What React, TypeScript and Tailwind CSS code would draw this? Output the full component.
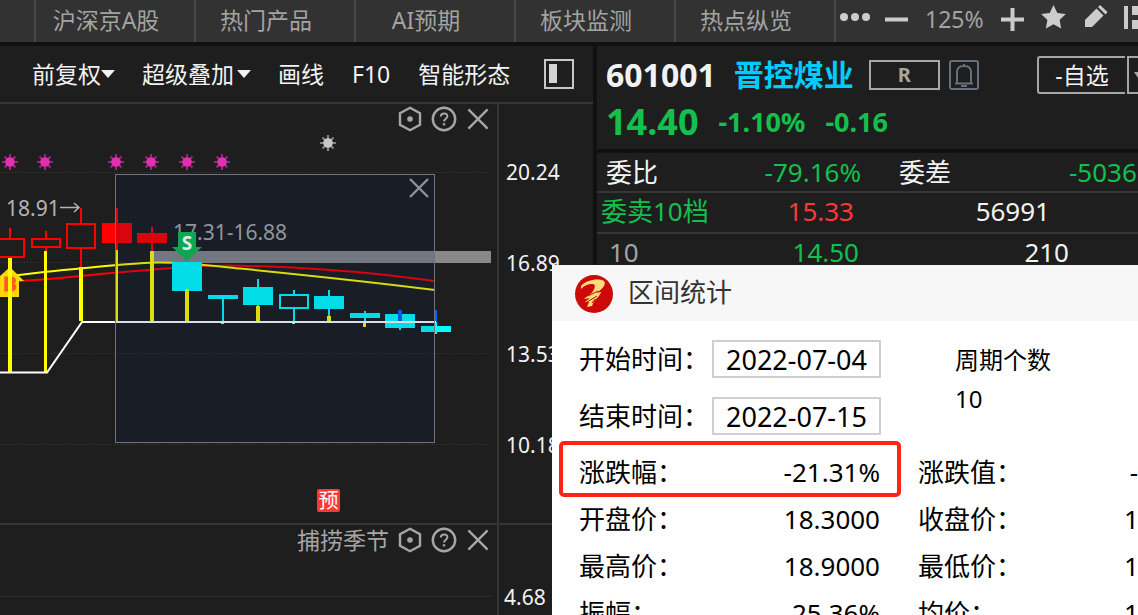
import type { ReactNode } from "react";

const TABS = ["沪深京A股", "热门产品", "AI预期", "板块监测", "热点纵览"];

const UP = "#ff0000";
const DOWN = "#00ffff";

interface Candle {
  x: number;
  high: number;
  low: number;
  top: number;
  bottom: number;
  color: string;
  hollow?: boolean;
}

const CANDLES: Candle[] = [
  { x: 10, high: 228, low: 258, top: 238, bottom: 258, color: UP, hollow: true },
  { x: 46, high: 231, low: 251, top: 238, bottom: 248, color: UP, hollow: true },
  { x: 81, high: 208, low: 267, top: 223, bottom: 249, color: UP, hollow: true },
  { x: 117, high: 208, low: 251, top: 223, bottom: 243, color: UP },
  { x: 152, high: 227, low: 251, top: 233, bottom: 243, color: UP },
  { x: 187, high: 262, low: 290, top: 262, bottom: 291, color: DOWN },
  { x: 223, high: 295, low: 322, top: 295, bottom: 299, color: DOWN },
  { x: 258, high: 279, low: 306, top: 287, bottom: 305, color: DOWN },
  { x: 294, high: 290, low: 322, top: 294, bottom: 309, color: DOWN, hollow: true },
  { x: 329, high: 290, low: 316, top: 296, bottom: 309, color: DOWN },
  { x: 365, high: 311, low: 323, top: 313, bottom: 318, color: DOWN },
  { x: 400, high: 314, low: 330, top: 314, bottom: 328, color: DOWN },
  { x: 436, high: 324, low: 334, top: 326, bottom: 332, color: DOWN },
];

// [x, y, width, height, color]
const BARS: [number, number, number, number, string][] = [
  [8, 258, 4, 114, "#ffff00"],
  [44, 251, 3, 121, "#ffff00"],
  [79, 267, 4, 54, "#ffff00"],
  [116, 250, 2, 71, "#ffff00"],
  [150, 251, 4, 70, "#ffff00"],
  [185, 289, 4, 32, "#ffff00"],
  [221, 322, 3, 2, "#ffff00"],
  [256, 306, 4, 15, "#ffff00"],
  [292, 321, 3, 3, "#ffff00"],
  [327, 316, 4, 5, "#ffff00"],
  [363, 323, 3, 4, "#ffff00"],
  [398, 310, 4, 11, "#0066ff"],
  [435, 310, 2, 11, "#0066ff"],
];

const STATS = [
  { label: "涨跌幅：", value: "-21.31%", label2: "涨跌值：", value2: "-" },
  { label: "开盘价：", value: "18.3000", label2: "收盘价：", value2: "1" },
  { label: "最高价：", value: "18.9000", label2: "最低价：", value2: "1" },
  { label: "振幅：", value: "25.36%", label2: "均价：", value2: "1" },
];

function Spark({ x, y, color }: { x: number; y: number; color: string }) {
  return (
    <g transform={`translate(${x} ${y})`}>
      <path d="M0-8V8M-8 0H8M-5.5-5.5 5.5 5.5M5.5-5.5-5.5 5.5" stroke={color} strokeWidth="2.2" opacity="0.6" />
      <circle r="4.8" fill={color} />
    </g>
  );
}

function PaneTools({ children }: { children?: ReactNode }) {
  return (
    <div className="absolute right-[6px] top-0 flex h-[30px] items-center gap-[8px] text-[#a6a6a6]">
      {children}
      <button type="button" aria-label="设置">
        <svg className="block" width="26" height="26" viewBox="0 0 26 26" fill="none" stroke="currentColor" strokeWidth="2.4">
          <path d="M13 1.8 23 7.2V18.8L13 24.2 3 18.8V7.2Z" />
          <circle cx="13" cy="13" r="2.8" fill="currentColor" stroke="none" />
        </svg>
      </button>
      <button type="button" aria-label="帮助">
        <svg className="block" width="26" height="26" viewBox="0 0 26 26" fill="none" stroke="currentColor" strokeWidth="2.4">
          <circle cx="13" cy="13" r="11.2" />
          <path d="M9.8 10.6C9.8 6.4 16.4 6.4 16.4 10.2 16.4 12.6 13 12.8 13 15.6" strokeWidth="2" />
          <path d="M13 17.2V19.4" />
        </svg>
      </button>
      <button type="button" aria-label="关闭">
        <svg className="block" width="26" height="26" viewBox="0 0 26 26" fill="none" stroke="currentColor" strokeWidth="2.4">
          <path d="M3.4 3.4 22.6 22.6M22.6 3.4 3.4 22.6" />
        </svg>
      </button>
    </div>
  );
}

function KLine() {
  return (
    <svg className="block" width="497" height="419" viewBox="0 104 497 419" fontFamily="'Noto Sans', 'Noto Sans CJK SC', sans-serif">
      {[172, 262, 353, 444].map((y) => (
        <path key={y} d={`M0 ${y + 0.5}H491`} stroke="#3c3c3c" strokeDasharray="1 2" />
      ))}
      {[10, 45, 116, 151, 187, 222].map((x) => (
        <Spark key={x} x={x} y={162} color="#e22fb4" />
      ))}
      <Spark x={328} y={143} color="#c8c8c8" />

      <rect x="154" y="251" width="337" height="12" fill="#888888" />
      <path d="M0 282C20 281 40 280 60 278S120 272 165 268.5 230 264.5 300 268 400 277 435 281" fill="none" stroke="#ff0000" strokeWidth="2" />
      <path d="M0 277C20 275 50 271 80 268.5S135 262.5 160 262.5 215 266 240 268.5 380 283 435 290" fill="none" stroke="#ffff00" strokeWidth="2" />

      {/* B marker */}
      <path d="M10 267 24 281H19V297H0V276Z" fill="#ffd60a" />
      <text x="10" y="291" fontSize="20" fontWeight="800" textAnchor="middle" fill="#ff5a1f" stroke="#ff5a1f">B</text>

      {CANDLES.map((c) => (
        <g key={c.x} stroke={c.color} strokeWidth="2">
          <path d={`M${c.x} ${c.high}V${c.top}M${c.x} ${c.bottom}V${Math.max(c.low, c.bottom)}`} />
          <rect x={c.x - 14} y={c.top + 1} width="28" height={c.bottom - c.top - 2} fill={c.hollow ? "none" : c.color} />
        </g>
      ))}
      {BARS.map(([x, y, w, h, color]) => (
        <rect key={x} x={x} y={y} width={w} height={h} fill={color} />
      ))}
      <path d="M436 322V334" stroke={DOWN} strokeWidth="2" />
      <path d="M0 372.5H47L82 322H436" fill="none" stroke="#ffffff" strokeWidth="2" />

      <text x="6" y="216" fontSize="21" fill="#b4b4b4">18.91</text>
      <path d="M60 207.5H79M74 203 79 207.5 74 212" fill="none" stroke="#b4b4b4" strokeWidth="1.5" />
      <text x="173" y="240" fontSize="21" fill="#aaaaaa">17.31-16.88</text>

      {/* selected range */}
      <rect x="115.5" y="174.5" width="319" height="268" fill="rgba(0,27,87,0.15)" stroke="#6d7480" />
      <path d="M410 179 428 197M428 179 410 197" stroke="#8f939b" strokeWidth="2.4" />

      {/* S marker */}
      <path d="M178 232H196V247H202L187 261 172 247H178Z" fill="#0da651" />
      <text x="187" y="250" fontSize="19" fontWeight="700" textAnchor="middle" fill="#dfe9e2">S</text>

      <rect x="317" y="489" width="23" height="23" rx="2" fill="#ff3636" />
      <text x="328.5" y="508" fontSize="20" textAnchor="middle" fill="#ffffff">预</text>
    </svg>
  );
}

function TopBar() {
  return (
    <header className="flex h-[42px] shrink-0 bg-[#323232] pl-[34px] text-[23px] leading-[38px] text-[#a3a3a3]">
      {TABS.map((tab) => (
        <button key={tab} type="button" className="w-[160px] shrink-0 border-l-2 border-[#474747] pb-[2px] pr-[18px]">
          {tab}
        </button>
      ))}
      <div className="flex grow items-start border-l-2 border-[#474747] text-[#cccccc]">
        <button type="button" aria-label="更多" className="ml-[3px]">
          <svg className="block" width="32" height="38" viewBox="0 0 32 38" fill="currentColor">
            <circle cx="5" cy="17" r="4" />
            <circle cx="16" cy="17" r="4" />
            <circle cx="27" cy="17" r="4" />
          </svg>
        </button>
        <button type="button" aria-label="缩小" className="ml-[14px]">
          <svg className="block" width="24" height="38" viewBox="0 0 24 38" fill="currentColor">
            <path d="M0 17.5H23V21.5H0Z" />
          </svg>
        </button>
        <span className="ml-[16px] w-[60px] text-[#a3a3a3]">125%</span>
        <button type="button" aria-label="放大" className="ml-[16px]">
          <svg className="block" width="24" height="38" viewBox="0 0 24 38" fill="currentColor">
            <path d="M0 17.5H9.5V8H13.5V17.5H23V21.5H13.5V31H9.5V21.5H0Z" />
          </svg>
        </button>
        <button type="button" aria-label="收藏" className="ml-[16px]">
          <svg className="block" width="26" height="38" viewBox="0 0 26 38" fill="currentColor">
            <path d="M12.5 5 16.3 12.9 24.8 14 18.6 20 20.2 28.5 12.5 24.3 4.8 28.5 6.4 20 .2 14 8.7 12.9Z" />
          </svg>
        </button>
        <button type="button" aria-label="编辑" className="ml-[18px]">
          <svg className="block" width="24" height="38" viewBox="0 0 24 38" fill="currentColor">
            <path d="M0 20 11.5 8.5 18.5 15.5 7 27H0Z" />
            <path d="M13 7 15 5 22.5 12 20.5 14.5Z" />
          </svg>
        </button>
        <button type="button" aria-label="布局" className="ml-[15px]">
          <svg className="block" width="14" height="38" viewBox="0 0 14 38" fill="currentColor">
            <path d="M0 6H4V29H0ZM8 6H14V15H8ZM8 20H14V29H8Z" />
          </svg>
        </button>
      </div>
    </header>
  );
}

function Caret() {
  return (
    <svg width="14" height="8" viewBox="0 0 14 8" fill="currentColor">
      <path d="M0 0H14L7 8Z" />
    </svg>
  );
}

function ChartPanel() {
  return (
    <section className="flex w-[593px] shrink-0 flex-col bg-[#1e1e1e]">
      <nav className="flex h-[58px] shrink-0 items-center border-b-2 border-[#353535] pl-8 text-[23px] leading-[34px] text-[#f2f2f2]">
        <button type="button" className="flex items-center">前复权<Caret /></button>
        <button type="button" className="ml-[27px] flex items-center gap-[3px]">超级叠加<Caret /></button>
        <button type="button" className="ml-[27px]">画线</button>
        <button type="button" className="ml-[28px]">F10</button>
        <button type="button" className="ml-[28px]">智能形态</button>
        <button type="button" aria-label="侧栏" className="ml-[34px]">
          <svg className="block" width="30" height="30" viewBox="0 0 30 30">
            <rect x="1" y="1" width="28" height="28" fill="none" stroke="#c8c8c8" strokeWidth="2" />
            <rect x="5" y="5" width="8" height="19" fill="#d4d4d4" />
          </svg>
        </button>
      </nav>
      <div className="flex h-[421px] shrink-0 border-b-2 border-[#353535]">
        <div className="relative w-[499px] border-r-2 border-[#353535]">
          <KLine />
          <PaneTools />
        </div>
        <div className="pl-[7px] pt-[23px] text-[21px] leading-[91px] text-[#f2f2f2]">
          <div>20.24</div>
          <div>16.89</div>
          <div>13.53</div>
          <div>10.18</div>
        </div>
      </div>
      <div className="flex min-h-[90px] grow">
        <div className="relative w-[499px] border-r-2 border-[#353535] pt-[71px]">
          <div className="mr-[6px] border-t border-dotted border-[#3c3c3c]" />
          <PaneTools>
            <span className="text-[23px] leading-[30px]">捕捞季节</span>
          </PaneTools>
        </div>
        <div className="pl-[5px] pt-[56px] text-[21px] leading-[32px] text-[#f2f2f2]">4.68</div>
      </div>
    </section>
  );
}

function QuotePanel() {
  return (
    <section className="flex min-w-0 grow flex-col overflow-hidden">
      <div className="h-[103px] shrink-0 bg-[#1e1e1e]">
        <div className="flex h-[58px] items-center pl-[9px]">
          <span className="text-[32px] font-bold leading-[40px] text-[#f2f2f2]">601001</span>
          <h1 className="ml-[18px] shrink-0 text-[30px] font-bold leading-[40px] text-[#00ccff]">晋控煤业</h1>
          <button type="button" className="ml-[15px] h-[30px] w-[71px] shrink-0 border-2 border-[#a6a6a6] text-[20px] font-bold leading-[26px] text-[#a6a6a6]">R</button>
          <button type="button" aria-label="预警" className="ml-[9px] shrink-0">
            <svg className="block" width="30" height="30" viewBox="0 0 30 30" fill="none" stroke="#686e7a" strokeWidth="2">
              <rect x="1" y="1" width="28" height="28" rx="2" />
              <path d="M6 23.5H24M8 23V12C8 8 11 6 15 6S22 8 22 12V23M15 4V6M12 26H18" />
            </svg>
          </button>
          <div className="ml-auto flex shrink-0 gap-[2px] text-[23px] leading-[34px] text-[#f2f2f2]">
            <button type="button" className="h-[38px] w-[88px] rounded-l-[3px] border-2 border-r-0 border-[#a6a6a6]">-自选</button>
            <button type="button" aria-label="更多自选" className="h-[38px] w-[11px] overflow-hidden border-2 border-r-0 border-[#a6a6a6] pl-[5px]">
              <svg className="block" width="4" height="6" viewBox="0 0 4 6" fill="#a6a6a6">
                <path d="M0 0H4V6Z" />
              </svg>
            </button>
          </div>
        </div>
        <div className="flex h-[36px] items-center pl-[9px] font-bold text-[#13c04d]">
          <span className="text-[36px] leading-[36px]">14.40</span>
          <span className="ml-[20px] text-[27px] leading-[34px]">-1.10%</span>
          <span className="ml-[20px] text-[27px] leading-[34px]">-0.16</span>
        </div>
      </div>
      <div className="mt-[4px] flex h-[40px] shrink-0 border-b-2 border-[#353535] bg-[#1e1e1e] pl-[9px] text-[26px] leading-[38px] text-[#13c04d]">
        <span className="w-[90px] shrink-0 text-[#f2f2f2]">委比</span>
        <span className="w-[165px] shrink-0 text-right">-79.16%</span>
        <span className="ml-[38px] w-[170px] shrink-0 text-[#f2f2f2]">委差</span>
        <span>-5036</span>
      </div>
      <table className="w-full table-fixed border-collapse bg-[#1e1e1e] text-[26px] leading-[36px] text-[#f2f2f2]">
        <tbody>
          <tr className="h-[40px] border-b-2 border-[#353535] align-top">
            <th className="w-[128px] whitespace-nowrap p-0 pl-[4px] text-left font-normal text-[#13c04d]">委卖10档</th>
            <td className="w-[134px] p-0 pr-[5px] text-right text-[#ff3838]">15.33</td>
            <td className="p-0 pr-[88px] text-right">56991</td>
          </tr>
          <tr className="h-[40px] align-top">
            <th className="p-0 pl-[12px] text-left font-normal text-[#a3a3a3]">10</th>
            <td className="p-0 text-right text-[#13c04d]">14.50</td>
            <td className="p-0 pr-[69px] text-right">210</td>
          </tr>
        </tbody>
      </table>
      <div className="grow bg-[#1e1e1e]" />
    </section>
  );
}

function RangeDialog() {
  return (
    <div role="dialog" aria-labelledby="range-title" className="absolute bottom-0 left-[552px] right-0 top-[265px] overflow-hidden bg-white text-[26px] text-black">
      <div className="flex h-[56px] items-center bg-[#f7f7f7] pl-[22px]">
        <svg width="40" height="40" viewBox="0 0 40 40">
          <circle cx="20" cy="21" r="19" fill="#cc0a0a" />
          <path d="M7 13C12 7 24 5 30 8 33 12 27 17 22 20L27 19C26 23 22 26 20 28L18 33 13 34 15 29 11 29 16 25 10 26C13 23 18 21 19 18 21 15 22 12 19 11 14 11 11 12 7 16Z" fill="#fbdc7d" />
          <path d="M14 23 24 18M13 29 23 23M18 30 21 26" stroke="#cc0a0a" strokeWidth="1" />
        </svg>
        <h2 id="range-title" className="ml-[14px] pb-[2px] leading-[36px] text-[#333333]">区间统计</h2>
      </div>
      <div className="flex pl-[27px] pt-[19px]">
        <div className="flex w-[376px] shrink-0 flex-col gap-[19px]">
          <div className="flex h-[38px] items-center">
            <label htmlFor="start" className="w-[133px] whitespace-nowrap leading-[38px]">开始时间：</label>
            <input id="start" defaultValue="2022-07-04" className="h-[38px] w-[169px] border-2 border-[#cfcfcf] bg-white text-center text-[27px] leading-[34px]" />
          </div>
          <div className="flex h-[38px] items-center">
            <label htmlFor="end" className="w-[133px] whitespace-nowrap leading-[38px]">结束时间：</label>
            <input id="end" defaultValue="2022-07-15" className="h-[38px] w-[169px] border-2 border-[#cfcfcf] bg-white text-center text-[27px] leading-[34px]" />
          </div>
        </div>
        <div className="text-[24px] leading-[39px]">
          <div>周期个数</div>
          <div>10</div>
        </div>
      </div>
      <div className="relative pl-[27px] pt-[13px]">
        {STATS.map((row) => (
          <div key={row.label} className="flex h-[47px] items-center whitespace-nowrap leading-[40px]">
            <span className="w-[120px] shrink-0">{row.label}</span>
            <span className="w-[181px] shrink-0 text-right">{row.value}</span>
            <span className="ml-[38px] w-[206px] shrink-0">{row.label2}</span>
            <span className="grow text-right">{row.value2}</span>
          </div>
        ))}
        <div className="absolute left-[7px] top-[6px] h-[56px] w-[342px] rounded-[5px] border-4 border-[#ff2413]" />
      </div>
    </div>
  );
}

export default function App() {
  return (
    <div className="relative flex h-screen flex-col overflow-hidden bg-[#111111] font-['Noto_Sans','Noto_Sans_CJK_SC',sans-serif]">
      <TopBar />
      <main className="mt-[4px] flex grow gap-[4px]">
        <ChartPanel />
        <QuotePanel />
      </main>
      <RangeDialog />
    </div>
  );
}
